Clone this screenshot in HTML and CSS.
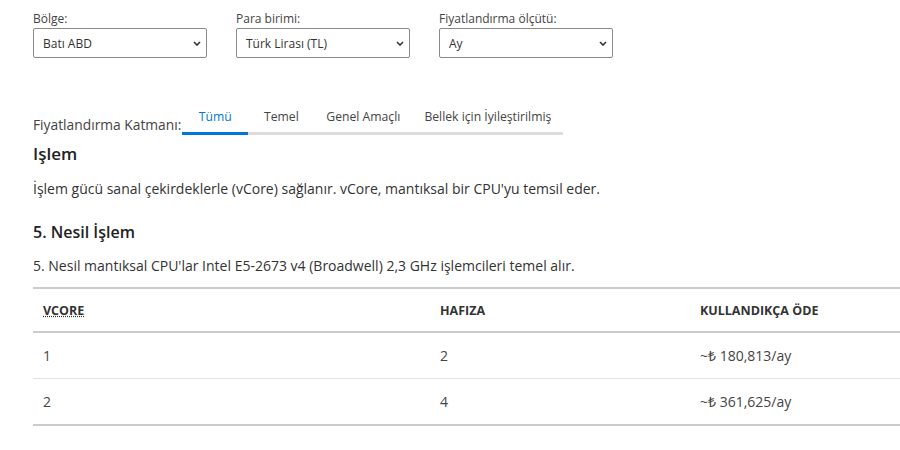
FILE: index.html
```html
<!DOCTYPE html>
<html lang="tr">
<head>
    <meta charset="UTF-8">
    <meta name="viewport" content="width=device-width, initial-scale=1.0">
    <title>Fiyatlandırma</title>
    <link rel="stylesheet" href="styles.css">
</head>
<body>
    <div class="filters">
        <div class="field">
            <label>Bölge:</label>
            <div class="select">
                <span>Batı ABD</span>
                <svg viewBox="0 0 8 5" width="8" height="5"><path d="M1 1l3 3 3-3" fill="none" stroke="#333" stroke-width="1.6"/></svg>
            </div>
        </div>
        <div class="field">
            <label>Para birimi:</label>
            <div class="select">
                <span>Türk Lirası (TL)</span>
                <svg viewBox="0 0 8 5" width="8" height="5"><path d="M1 1l3 3 3-3" fill="none" stroke="#333" stroke-width="1.6"/></svg>
            </div>
        </div>
        <div class="field">
            <label>Fiyatlandırma ölçütü:</label>
            <div class="select">
                <span>Ay</span>
                <svg viewBox="0 0 8 5" width="8" height="5"><path d="M1 1l3 3 3-3" fill="none" stroke="#333" stroke-width="1.6"/></svg>
            </div>
        </div>
    </div>

    <div class="tier">
        <span class="tier-label">Fiyatlandırma Katmanı:</span>
        <div class="tabs">
            <button class="tab active">Tümü</button>
            <button class="tab">Temel</button>
            <button class="tab">Genel Amaçlı</button>
            <button class="tab">Bellek için İyileştirilmiş</button>
        </div>
    </div>

    <h2>Işlem</h2>
    <p class="intro">İşlem gücü sanal çekirdeklerle (vCore) sağlanır. vCore, mantıksal bir CPU'yu temsil eder.</p>

    <h3>5. Nesil İşlem</h3>
    <p class="desc">5. Nesil mantıksal CPU'lar Intel E5-2673 v4 (Broadwell) 2,3 GHz işlemcileri temel alır.</p>

    <table class="prices">
        <thead>
            <tr>
                <th class="c1"><abbr title="Sanal çekirdek">VCORE</abbr></th>
                <th class="c2">HAFIZA</th>
                <th>KULLANDIKÇA ÖDE</th>
            </tr>
        </thead>
        <tbody>
            <tr>
                <td>1</td>
                <td>2</td>
                <td>~₺ 180,813/ay</td>
            </tr>
            <tr>
                <td>2</td>
                <td>4</td>
                <td>~₺ 361,625/ay</td>
            </tr>
        </tbody>
    </table>
</body>
</html>
```

FILE: styles.css
```css
body {
    margin: 0;
    padding: 11px 0 0 33px;
    font-family: 'Open Sans', 'Noto Sans', sans-serif;
    color: #333;
    background: #fff;
}

.filters {
    display: flex;
    gap: 29px;
}

.field label {
    display: block;
    font-size: 12px;
    line-height: 16px;
    color: #444;
    margin-bottom: 1px;
}

.select {
    width: 174px;
    height: 30px;
    box-sizing: border-box;
    display: flex;
    align-items: center;
    justify-content: space-between;
    padding: 0 5px 0 9px;
    border: 1px solid #8a8a8a;
    border-radius: 2px;
    font-size: 12px;
    color: #333;
}

.tier {
    display: flex;
    align-items: flex-end;
    margin-top: 50px;
}

.tier-label {
    font-size: 13.8px;
    color: #444;
    padding-bottom: 1px;
}

.tabs {
    display: flex;
    margin-left: 1px;
}

.tab {
    min-width: 66px;
    font-family: inherit;
    font-size: 12.2px;
    color: #444;
    background: none;
    border: none;
    border-bottom: 3px solid #ddd;
    padding: 0 12px 7px;
    text-align: center;
    cursor: pointer;
}

.tab.active {
    color: #0078d4;
    border-bottom-color: #0078d4;
}

h2 {
    font-size: 17px;
    font-weight: 600;
    color: #222;
    margin: 7px 0 0;
}

.intro {
    font-size: 14px;
    margin: 14px 0 0;
}

h3 {
    font-size: 16px;
    font-weight: 600;
    color: #222;
    margin: 23px 0 0;
}

.desc {
    font-size: 14px;
    margin: 13px 0 0;
}

.prices {
    width: 867px;
    margin-top: 12px;
    border-collapse: collapse;
    border-top: 2px solid #ccc;
    border-bottom: 2px solid #ccc;
}

.prices th {
    text-align: left;
    font-size: 12.5px;
    font-weight: 700;
    color: #333;
    height: 42px;
    padding: 0 10px;
    border-bottom: 2px solid #ccc;
}

.prices th.c1 {
    width: 377px;
}

.prices th.c2 {
    width: 240px;
}

.prices td {
    height: 45px;
    padding: 0 10px;
    font-size: 14px;
    color: #444;
}

.prices tbody tr + tr td {
    border-top: 1px solid #e3e3e3;
}

abbr {
    text-decoration: underline dotted;
}
```
